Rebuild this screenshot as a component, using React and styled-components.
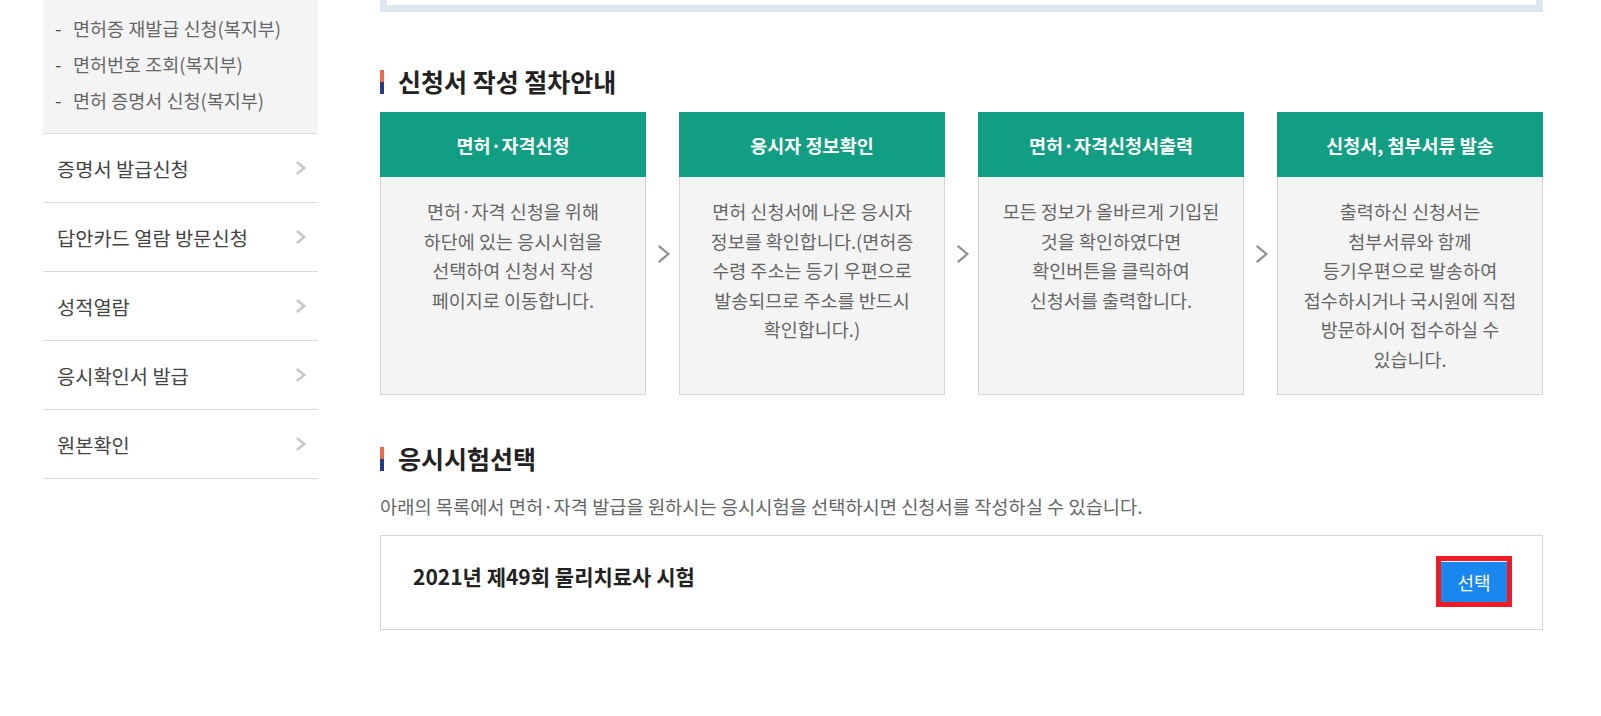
import styled, { createGlobalStyle } from 'styled-components';

const GlobalStyle = createGlobalStyle`
  body {
    margin: 0;
    background: #fff;
    font-family: 'Noto Sans CJK KR', 'Noto Sans', sans-serif;
    color: #333;
  }
`;

const subLinks = ['면허증 재발급 신청(복지부)', '면허번호 조회(복지부)', '면허 증명서 신청(복지부)'];
const menu = ['증명서 발급신청', '답안카드 열람 방문신청', '성적열람', '응시확인서 발급', '원본확인'];

const steps = [
  {
    title: '면허·자격신청',
    lines: ['면허·자격 신청을 위해', '하단에 있는 응시시험을', '선택하여 신청서 작성', '페이지로 이동합니다.'],
  },
  {
    title: '응시자 정보확인',
    lines: ['면허 신청서에 나온 응시자', '정보를 확인합니다.(면허증', '수령 주소는 등기 우편으로', '발송되므로 주소를 반드시', '확인합니다.)'],
  },
  {
    title: '면허·자격신청서출력',
    lines: ['모든 정보가 올바르게 기입된', '것을 확인하였다면', '확인버튼을 클릭하여', '신청서를 출력합니다.'],
  },
  {
    title: '신청서, 첨부서류 발송',
    lines: ['출력하신 신청서는', '첨부서류와 함께', '등기우편으로 발송하여', '접수하시거나 국시원에 직접', '방문하시어 접수하실 수', '있습니다.'],
  },
];

const Chevron = ({ w, h, color, stroke }) => (
  <svg width={w} height={h} viewBox={`0 0 ${w} ${h}`} fill="none">
    <polyline
      points={`${stroke / 2 + 0.5},${stroke / 2 + 0.5} ${w - stroke / 2 - 0.5},${h / 2} ${stroke / 2 + 0.5},${h - stroke / 2 - 0.5}`}
      stroke={color}
      strokeWidth={stroke}
      strokeLinecap="square"
    />
  </svg>
);

const App = () => {
  return (
    <>
      <GlobalStyle />
      <Page>
        {/* Left Sidebar */}
        <Sidebar>
          <SubMenu>
            {subLinks.map((item) => (
              <SubLink key={item}>
                <span className="dash">-</span>
                {item}
              </SubLink>
            ))}
          </SubMenu>
          {menu.map((item) => (
            <MenuItem key={item}>
              {item}
              <Chevron w={10} h={14} color="#c8c8c8" stroke={2.6} />
            </MenuItem>
          ))}
        </Sidebar>

        {/* Main Content */}
        <Main>
          <TopBox />

          <SectionTitle $top={58}>신청서 작성 절차안내</SectionTitle>
          <Steps>
            {steps.map((step, i) => (
              <StepGroup key={step.title}>
                {i > 0 && (
                  <Arrow>
                    <Chevron w={12} h={18} color="#8f8f8f" stroke={2.2} />
                  </Arrow>
                )}
                <StepCard>
                  <StepHead>{step.title}</StepHead>
                  <StepBody>
                    {step.lines.map((line) => (
                      <div key={line}>{line}</div>
                    ))}
                  </StepBody>
                </StepCard>
              </StepGroup>
            ))}
          </Steps>

          <SectionTitle $top={52}>응시시험선택</SectionTitle>
          <Desc>아래의 목록에서 면허·자격 발급을 원하시는 응시시험을 선택하시면 신청서를 작성하실 수 있습니다.</Desc>
          <ExamBox>
            <ExamTitle>2021년 제49회 물리치료사 시험</ExamTitle>
            <SelectButton type="button">선택</SelectButton>
          </ExamBox>
        </Main>
      </Page>
    </>
  );
};

const Page = styled.div`
  display: flex;
  align-items: flex-start;
  gap: 62px;
  padding-left: 43px;
  width: 1601px;
  box-sizing: border-box;
`;

const Sidebar = styled.aside`
  width: 275px;
  flex-shrink: 0;
`;

const SubMenu = styled.ul`
  list-style: none;
  margin: 0;
  padding: 10px 0 15px 12px;
  background: #f4f4f4;
  border-bottom: 1px solid #dcdcdc;
`;

const SubLink = styled.li`
  height: 36px;
  line-height: 36px;
  font-size: 18.5px;
  color: #666;

  .dash {
    display: inline-block;
    width: 18px;
    color: #555;
  }
`;

const MenuItem = styled.div`
  height: 68px;
  border-bottom: 1px solid #dcdcdc;
  display: flex;
  align-items: center;
  justify-content: space-between;
  padding: 0 12px 0 14px;
  font-size: 19.8px;
  color: #444;
`;

const Main = styled.main`
  width: 1163px;
`;

const TopBox = styled.div`
  height: 5px;
  border: 7px solid #dfe8f1;
  border-top: 0;
`;

const SectionTitle = styled.h3`
  position: relative;
  margin: ${(p) => p.$top}px 0 0;
  padding-left: 18px;
  height: 24px;
  line-height: 23px;
  font-size: 25px;
  font-weight: 700;
  color: #222;

  &::before {
    content: '';
    position: absolute;
    left: 0;
    top: 0;
    width: 4px;
    height: 24px;
    background: linear-gradient(#e96a4d 50%, #263c80 50%);
  }
`;

const Steps = styled.div`
  display: flex;
  margin-top: 18px;
`;

const StepGroup = styled.div`
  display: flex;
  align-items: center;
`;

const Arrow = styled.div`
  width: 33px;
  display: flex;
  justify-content: center;
  padding-left: 2px;
  box-sizing: border-box;
`;

const StepCard = styled.div`
  width: 266px;
`;

const StepHead = styled.div`
  height: 65px;
  display: flex;
  align-items: center;
  justify-content: center;
  background: #119e83;
  color: #fff;
  font-size: 18.5px;
  font-weight: 700;
`;

const StepBody = styled.div`
  height: 218px;
  box-sizing: border-box;
  padding-top: 20px;
  background: #f4f4f4;
  border: 1px solid #d6d6d6;
  border-top: 0;
  text-align: center;
  font-size: 18.5px;
  line-height: 29.5px;
  color: #666;
  white-space: nowrap;
`;

const Desc = styled.p`
  margin: 23px 0 0;
  font-size: 18.7px;
  line-height: 24px;
  color: #666;
`;

const ExamBox = styled.div`
  margin-top: 17px;
  height: 95px;
  box-sizing: border-box;
  border: 1px solid #d6d6d6;
  display: flex;
  justify-content: space-between;
  align-items: flex-start;
  padding: 20px 30px 0 32px;
`;

const ExamTitle = styled.div`
  margin-top: 7px;
  font-size: 21px;
  line-height: 26px;
  font-weight: 700;
  color: #222;
`;

const SelectButton = styled.button`
  width: 76px;
  height: 51px;
  border: 5px solid #ed1c24;
  background: #1a87ef;
  box-shadow: inset 0 1px 0 #fff;
  color: #fff;
  font-family: inherit;
  font-size: 18px;
  padding: 0;
  cursor: pointer;
`;

export default App;
